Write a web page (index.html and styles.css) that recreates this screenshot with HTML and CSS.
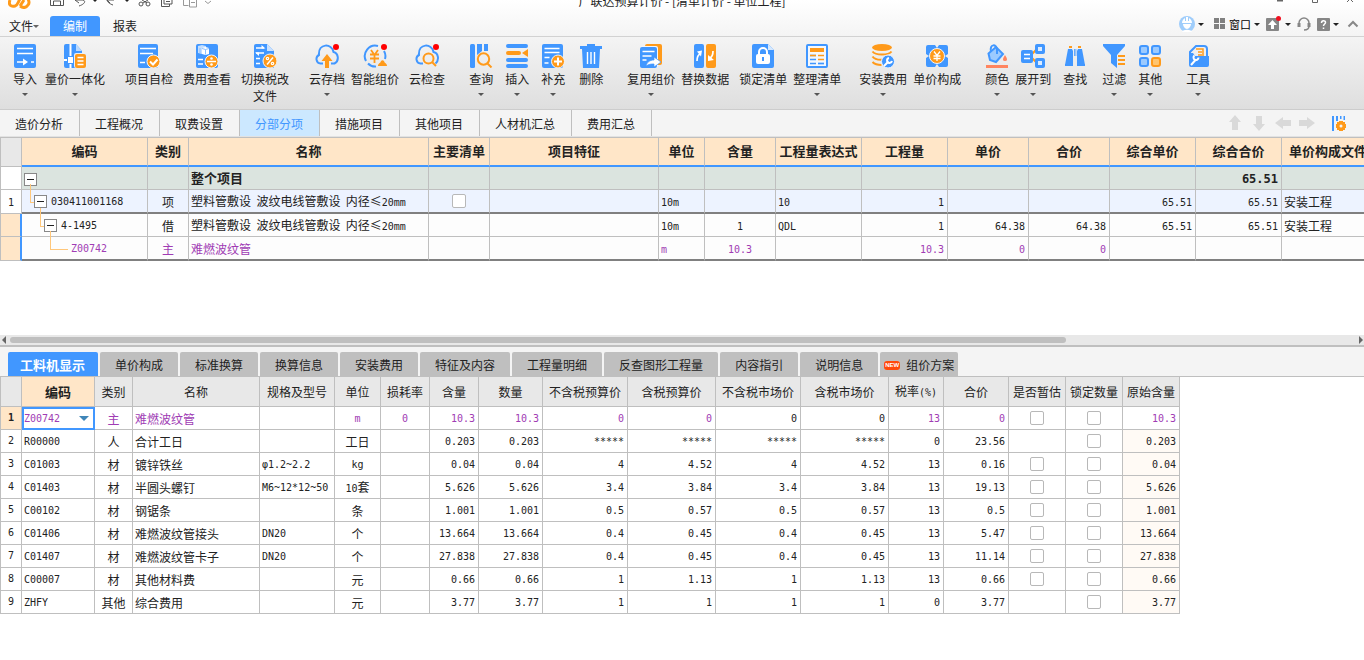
FILE: index.html
```html
<!DOCTYPE html>
<html lang="zh-CN">
<head>
<meta charset="utf-8">
<title>广联达预算计价</title>
<link rel="stylesheet" href="styles.css">
</head>
<body>
<header class="top">
  <div class="titlebar">
    <div class="quick">
      <svg class="logo" width="26" height="9" viewBox="0 0 26 9"><path d="M2 0c-2 5 1 7 5 6 3-1 3-4 5-7M12 6c3 2 6 2 8-1 2-2 1-4 0-6M12 6l4-6" fill="none" stroke="#ff9a1a" stroke-width="3"/></svg>
      <svg width="166" height="8" viewBox="0 0 166 8" fill="none" stroke="#555" stroke-width="1"><path d="M.5 0v5.500h13V0M3.500 5V1h7v4"/><path d="M25 0h8c3 1 2 4-4 6M28-2l-3 2 4 3" /><path d="M43 0h4l-2 2z" fill="#222" stroke="none"/><path d="M64 0h-7l3 3M57 0c0 2 3 4 6 5"/><path d="M75 0h4l-2 2z" fill="#222" stroke="none"/><path d="M92 0l5 3M98 0l-5 3"/><circle cx="91" cy="4" r="2"/><circle cx="98" cy="4" r="2"/><path d="M111.500 0v6.500h8V4M114 0v4h8V0M116 1.500h4"/><g stroke="#999"><path d="M133.500 0v5.500h5M139.500 0v7h7V0M141 2.500h4M155 1l3 2.500L161 1"/></g></svg>
    </div>
    <div class="apptitle">广联达预算计价 - [清单计价 - 单位工程]</div>
    <div class="winbtns">
      <svg width="80" height="6" viewBox="0 0 80 6" stroke="#666" fill="none"><path d="M0 .5h6" stroke-width="2"/><path d="M35.500 0v2.500h5V0M70 2l3-3 3 3"/></svg>
    </div>
  </div>
  <div class="menubar">
    <nav class="menus">
      <button class="menu file">文件<i class="caret sm"></i></button>
      <button class="menu on">编制</button>
      <button class="menu">报表</button>
    </nav>
    <div class="tools">
      <button class="user" aria-label="用户"><svg width="16" height="16" viewBox="0 0 16 16"><circle cx="8" cy="8" r="8" fill="#9fcdfb"/><path d="M3 7h10c0-2-1-4-3-5v3H9V1H7v4H6V2C4 3 3 5 3 7zM4 8h8c0 2-2 5-4 5s-4-3-4-5zM3 16c1-3 9-3 10 0z" fill="#fff"/></svg><i class="caret"></i></button>
      <button class="win"><svg width="12" height="12" viewBox="0 0 12 12" fill="#808080"><path d="M0 0h5v5H0zM6 0h5v5H6zM0 6h5v5H0zM6 6h5v5H6z"/></svg><span>窗口</span><i class="caret"></i></button>
      <button aria-label="上传"><svg width="16" height="16" viewBox="0 0 16 16"><rect y="2" width="13" height="13" rx="1" fill="#868686"/><path d="M6.500 4L11 9H8v4H5V9H2z" fill="#fff"/><circle cx="12.500" cy="2.500" r="2.500" fill="#f01020"/></svg><i class="caret"></i></button>
      <button aria-label="客服"><svg width="14" height="14" viewBox="0 0 14 14" fill="none" stroke="#868686" stroke-width="1.500"><path d="M2 9V6a5 5 0 0 1 10 0v3c0 3-2 4-5 4"/><path d="M2 6v4M12 6v4" stroke-width="3"/></svg></button>
      <button aria-label="帮助"><svg width="13" height="13" viewBox="0 0 13 13"><rect width="13" height="13" rx="1" fill="#868686"/><path d="M4.500 5c0-3 4-3 4-.5 0 1.500-2 1.500-2 3.500M6.500 9.500v1.500" fill="none" stroke="#fff" stroke-width="1.500"/></svg><i class="caret"></i></button>
      <button class="fold" aria-label="收起"><svg width="12" height="8" viewBox="0 0 12 8"><path d="M1.500 6.500L6 2l4.500 4.500" fill="none" stroke="#888" stroke-width="2"/></svg></button>
    </div>
  </div>
</header>

<div class="ribbon">
  <button class="rb"><svg viewBox="0 0 24 24"><rect class="b" x="1" width="22" height="24" rx="2"/><path class="ws" d="M4 4.500h16M4 9.500h16M4 18h8M18 18h3" stroke-width="1.700"/><path class="w" d="M10 14.500l5 3.500-5 3.500z"/></svg>导入<i class="caret"></i></button>
  <button class="rb g8"><svg viewBox="0 0 24 24"><path class="b" d="M3 0h10l6 7v14a2 2 0 0 1-2 3H3a2 2 0 0 1-2-2V2a2 2 0 0 1 2-2z"/><path d="M13 0l6 7h-6z" fill="#b9d9ff"/><path class="ws" d="M7.500 0v24M1 16h11"/><path class="b" d="M4 12h7v8H4z"/><path class="w" d="M5 13h5v6H5z"/><rect x="11" y="9" width="13" height="15" rx="2" fill="#e8eff8"/><rect class="o" x="12" y="10" width="11" height="14" rx="2"/><path class="ws" d="M14.500 13.500h6M14.500 17h6M14.500 20.500h6" stroke-width="1.500"/></svg>量价一体化<i class="caret"></i></button>
  <button class="rb g20"><svg viewBox="0 0 24 24"><rect class="b" x="1" width="20" height="24" rx="2"/><path class="ws" d="M3 4.500h16M3 9.500h13M3 18.500h5" stroke-width="1.700"/><circle class="oc" cx="16.500" cy="17.500" r="6.500"/><path class="ws" d="M13 17.500l3 3 4.500-5"/></svg>项目自检</button>
  <button class="rb g10"><svg viewBox="0 0 24 24"><rect class="b" x="1" width="22" height="24" rx="2"/><path d="M3 2l4-1 4 1v7l-4 1-4-1z" fill="#c4dfff"/><path d="M7 4l3.500-1L14 4v6l-3.500 1L7 10z" class="w"/><path d="M5 4v5M10.500 5.500v5M7 4.500l3.500 1 3.500-1" stroke="#8bbfff" fill="none" stroke-width="1"/><path class="ws" d="M3 15.500h5M3 20h5" stroke-width="1.700"/><circle class="oc" cx="16.500" cy="17.500" r="6.500"/><path class="ws" d="M12 17.500h9" stroke-width="1.500"/><circle class="w" cx="16.500" cy="14.500" r="1.300"/><circle class="w" cx="16.500" cy="20.500" r="1.300"/></svg>费用查看</button>
  <button class="rb g10"><svg viewBox="0 0 24 24"><path class="b" d="M3 0h11l7 7v17H3a2 2 0 0 1-2-2V2a2 2 0 0 1 2-2z"/><path d="M14 0l7 7h-7z" fill="#c9e1ff"/><path class="ws" d="M3 4h8M3 9h8M3 14.500h4M3 19.500h4" stroke-width="1.500"/><path class="w" d="M8.500 1l4 3.500h-4zM6 12L2 8.500h4z"/><circle class="oc" cx="17" cy="17" r="7"/><path class="ws" d="M14 20.500l6-7" stroke-width="1.500"/><circle class="ws" cx="14.500" cy="14.500" r="1.200" stroke-width="1.200"/><circle class="ws" cx="19.500" cy="19.500" r="1.200" stroke-width="1.200"/></svg><span>切换税改<br>文件</span></button>
  <button class="rb g20"><svg viewBox="0 0 24 24"><path class="bs" d="M8 19.500H5.500A4.500 4.500 0 0 1 4 11C3-1 17-1 18.500 8c5 1 6 9 1 11.500H16"/><path class="o" d="M12 10l5.500 7H14v7h-4v-7H6.500z"/><circle class="red" cx="21" cy="3" r="3"/></svg>云存档<i class="caret"></i></button>
  <button class="rb g6"><svg viewBox="0 0 24 24"><path class="bs" d="M15 2A10.500 10.500 0 0 0 3 17M5 19.500a10 10 0 0 0 8 3M21 7a10 10 0 0 1 1 8"/><path class="os" d="M8 6l3.500 5L15 6M7 10.500h9M7 14.500h9M11.500 10v9" stroke-width="1.800"/><path class="o" d="M15 22c0-3 2-2 3-5 1-1 2-1 3 0 1 3 3 2 3 5z"/><circle class="red" cx="21" cy="3" r="3"/></svg>智能组价</button>
  <button class="rb g10"><svg viewBox="0 0 24 24"><path class="bs" d="M8 19.500H5.500A4.500 4.500 0 0 1 4 11C3-1 17-1 18.500 8c5 1 6 8 2 11.500"/><circle class="os" cx="13.500" cy="14.500" r="5"/><path class="os" d="M17 18l4 4"/><circle class="red" cx="21" cy="3" r="3"/></svg>云检查</button>
  <button class="rb g24"><svg viewBox="0 0 24 24"><rect class="b" x="1" width="5" height="24" rx="1.500"/><path class="b" d="M8 0h5v7l-5 4zM15 0h4v7h-4z"/><circle class="os" cx="14.500" cy="15" r="5.700"/><path class="os" d="M18.500 19.500l4 4"/></svg>查询<i class="caret"></i></button>
  <button class="rb g12"><svg viewBox="0 0 24 24"><path class="b" d="M3 0h18q2 0 2 2t-2 2H3Q1 4 1 2t2-2zM3 14h18q2 0 2 2t-2 2H3q-2 0-2-2t2-2zM3 20h18q2 0 2 2t-2 2H3q-2 0-2-2t2-2z"/><path class="o" d="M3 7h11q2 0 2 2t-2 2H3q-2 0-2-2t2-2zM23 5v8l-6-4z"/></svg>插入<i class="caret"></i></button>
  <button class="rb g12"><svg viewBox="0 0 24 24"><rect class="b" x="1" width="21" height="24" rx="2"/><path class="ws" d="M3.500 4.500h15M3.500 8.500h15M3.500 13.500h5M3.500 19h4" stroke-width="1.500"/><circle class="oc" cx="17" cy="17.500" r="6.500"/><path class="ws" d="M13 17.500h8M17 13.500v8"/></svg>补充<i class="caret"></i></button>
  <button class="rb g14"><svg viewBox="0 0 24 24"><path class="b" d="M8 0h8v2h7v3h-2l-1 19H4L3 5H1V2h7z"/><path class="ws" d="M8.500 8v12M12 8v12M15.500 8v12" stroke-width="1.400"/></svg>删除</button>
  <button class="rb g24"><svg viewBox="0 0 24 24"><rect class="o" x="6" width="17" height="21" rx="2"/><rect x="1" y="2" width="18" height="22" rx="2" fill="#f2f5fa"/><rect class="b" x="1" y="3" width="17" height="21" rx="2"/><path class="ws" d="M3.500 7.500h12M3.500 12h9M3.500 16h4" stroke-width="1.500"/><path d="M7 22c1-4 4-6 8-6v-3l7 5-7 5v-3c-3 0-5 0-8 2z" class="w" stroke="#4197ff" stroke-width=".7"/></svg>复用组价<i class="caret"></i></button>
  <button class="rb g6"><svg viewBox="0 0 24 24"><rect class="b" x="1" width="10" height="24" rx="2"/><rect class="o" x="13" width="10" height="24" rx="2"/><path class="ws" d="M4 17c0-4 1-6 3-7M20 7c0 4-1 6-3 7" stroke-width="1.700"/><path class="w" d="M4 7.500l5-1-1 6zM15 11v6l6-1z"/></svg>替换数据</button>
  <button class="rb g10"><svg viewBox="0 0 24 24"><path class="b" d="M3 0h14l6 6v16a2 2 0 0 1-2 2H3a2 2 0 0 1-2-2V2a2 2 0 0 1 2-2z"/><path d="M17 0l6 6h-6z" fill="#d4e8ff"/><path class="ws" d="M8 11V8a4 4 0 0 1 8 0v3"/><rect class="w" x="5" y="10" width="14" height="10" rx="2"/><path class="bs" d="M12 13v4"/></svg>锁定清单</button>
  <button class="rb g6"><svg viewBox="0 0 24 24"><rect x="2" y="1" width="20" height="22" rx="1" fill="#f4f8fd" stroke="#4197ff"/><rect class="o" x="5" y="4" width="14" height="4"/><path class="bs" d="M5 11.500h6M5 15.500h6M5 19.500h6" stroke-width="1.700"/><path class="os" d="M13 15.500h6M5 11.500h6M13 11.500h6" stroke-width="1.700"/><path class="bs" d="M13 19.500h6" stroke-width="1.700"/></svg>整理清单<i class="caret"></i></button>
  <button class="rb g18"><svg viewBox="0 0 24 24"><ellipse class="o" cx="11" cy="3.500" rx="10" ry="3.500"/><path class="os" d="M1.500 7.500c3 4 16 4 19 0M1.500 12.500c2 3 8 3.500 12 3M1.500 18c2 2 5 3 9 3"/><circle cx="17" cy="17.500" r="6.500" fill="#4197ff" stroke="#eef4fb" stroke-width="1"/><path class="ws" d="M13 22l4.500-4.500"/><path class="ws" d="M18 14a2.500 2.500 0 1 0 3 3"/></svg>安装费用<i class="caret"></i></button>
  <button class="rb g6"><svg viewBox="0 0 24 24"><path class="b" d="M3 1h7l2 3 2-3h7q2 0 2 2v7l-3 2 3 2v7q0 2-2 2h-7l-2-3-2 3H3q-2 0-2-2v-7l3-2-3-2V3q0-2 2-2z"/><circle class="oc" cx="12" cy="12" r="7.500"/><path class="ws" d="M9 7.500l3 4 3-4M8.500 12h7M8.500 14.500h7M12 11v6" stroke-width="1.300"/></svg>单价构成</button>
  <button class="rb g24"><svg viewBox="0 0 24 24"><path d="M3.500 9.500L11 3l7 7-7 8-6-2z" fill="#9bcaff" stroke="#4197ff"/><path class="bs" d="M6 8c-2-9 6-8 6-2v4"/><path d="M20 11q4 6 0 6t0-6zM1 21h22v3H1z" fill="#ff8560"/></svg>颜色<i class="caret"></i></button>
  <button class="rb g6"><svg viewBox="0 0 24 24"><path class="os" d="M11 10l5-5M11 14l5 5"/><rect class="b" y="6" width="12" height="13" rx="2"/><path class="ws" d="M3 10.500h6M3 14.500h6" stroke-width="1.500"/><rect class="b" x="14" width="10" height="10" rx="2"/><rect class="b" x="14" y="14" width="10" height="10" rx="2"/><path d="M17 3h4v4h-4zM17 17h4v4h-4z" fill="#dcecff"/></svg>展开到<i class="caret"></i></button>
  <button class="rb g12"><svg viewBox="0 0 24 24"><path class="b" d="M5 5h4l1 2v14H2zM15 5h4l3 16h-8V7zM11 5h.8v7H11zM12.500 5h.8v7h-.8z"/><path class="b" d="M2 20h8v2H2zM14 20h8v2h-8z"/><path class="o" d="M6 2h3v2H6zM15 2h3v2h-3z"/></svg>查找</button>
  <button class="rb g15"><svg viewBox="0 0 24 24"><path class="b" d="M1 0h22v2l-8 9v13l-6-5v-8L1 2z"/><path class="os" d="M16 12h7M16 16h7M16 20h7"/></svg>过滤<i class="caret"></i></button>
  <button class="rb g12"><svg viewBox="0 0 24 24" fill="#9bcaff" stroke="#4197ff"><rect x="2" y="2" width="8" height="8" rx="2"/><rect x="14" y="2" width="8" height="8" rx="2"/><rect x="2" y="14" width="8" height="8" rx="2"/><rect x="14" y="14" width="8" height="8" rx="2" fill="#ffc56f" stroke="#ff9a1a"/></svg>其他<i class="caret"></i></button>
  <button class="rb g24"><svg viewBox="0 0 24 24"><path class="bs" d="M4 12V8l6-6h8q3 0 3 3v7"/><path class="os" d="M10 5h7v7M12 8h4M12 11h4" stroke-width="1.500"/><path class="b" d="M3 9h4l2 3h14v9q0 2-2 2H5q-2 0-2-2z"/><path class="ws" d="M5 21l4.500-5"/><path class="ws" d="M8.500 11.500a2.500 2.500 0 1 0 4 2"/></svg>工具<i class="caret"></i></button>
</div>

<div class="pagebar">
  <nav class="pages">
    <button>造价分析</button><button>工程概况</button><button>取费设置</button><button class="on">分部分项</button><button>措施项目</button><button>其他项目</button><button>人材机汇总</button><button>费用汇总</button>
  </nav>
  <div class="moves">
    <button aria-label="上移"><svg viewBox="0 0 16 16"><path d="M8 0l6 7h-3v8H5V7H2z"/></svg></button>
    <button aria-label="下移"><svg viewBox="0 0 16 16"><path d="M8 16l6-7h-3V1H5v8H2z"/></svg></button>
    <button aria-label="左移"><svg viewBox="0 0 16 16"><path d="M0 8l8-6v3h8v6H8v3z"/></svg></button>
    <button aria-label="右移"><svg viewBox="0 0 16 16"><path d="M16 8L8 2v3H0v6h8v3z"/></svg></button>
    <button class="cols" aria-label="列设置"><svg viewBox="0 0 16 16"><path class="b" d="M1 1h2v15H1zM5 1h2v5H5zM9 1h1.500v3H9zM12.500 1H14v4h-1.500z"/><path class="o" d="M8 6h4v1h2v2h1v4h-1v2h-2v1H8v-1H6v-2H5V9h1V7h2z"/><circle cx="10" cy="11" r="1.500" fill="#f4f4f4"/></svg></button>
  </div>
</div>

<main class="upper">
<table class="grid bill">
<colgroup><col class="w22"><col class="w126"><col class="w41"><col class="w240"><col class="w61"><col class="w169"><col class="w46"><col class="w71"><col class="w86"><col class="w86"><col class="w81"><col class="w81"><col class="w86"><col class="w86"><col class="w93"></colgroup>
<thead><tr><th class="no"></th><th>编码</th><th>类别</th><th>名称</th><th>主要清单</th><th>项目特征</th><th>单位</th><th>含量</th><th>工程量表达式</th><th>工程量</th><th>单价</th><th>合价</th><th>综合单价</th><th>综合合价</th><th>单价构成文件</th></tr></thead>
<tbody>
<tr class="total"><td class="no"></td><td class="tree"><button class="tg" aria-label="折叠"></button></td><td></td><td>整个项目</td><td></td><td></td><td></td><td></td><td></td><td></td><td></td><td></td><td></td><td class="r"><span class="m big">65.51</span></td><td></td></tr>
<tr class="item"><td class="no"><span class="m">1</span></td><td class="tree l1"><button class="tg" aria-label="折叠"></button><span class="m">030411001168</span></td><td class="c">项</td><td>塑料管敷设&nbsp; 波纹电线管敷设&nbsp; 内径≤<span class="m">20mm</span></td><td class="c"><input type="checkbox" aria-label="主要清单"></td><td></td><td><span class="m">10m</span></td><td></td><td><span class="m">10</span></td><td class="r"><span class="m">1</span></td><td></td><td></td><td class="r"><span class="m">65.51</span></td><td class="r"><span class="m">65.51</span></td><td>安装工程</td></tr>
<tr class="sub"><td class="no cur"></td><td class="tree l2"><button class="tg" aria-label="折叠"></button><span class="m">4-1495</span></td><td class="c">借</td><td>塑料管敷设&nbsp; 波纹电线管敷设&nbsp; 内径≤<span class="m">20mm</span></td><td></td><td></td><td><span class="m">10m</span></td><td class="c"><span class="m">1</span></td><td><span class="m">QDL</span></td><td class="r"><span class="m">1</span></td><td class="r"><span class="m">64.38</span></td><td class="r"><span class="m">64.38</span></td><td class="r"><span class="m">65.51</span></td><td class="r"><span class="m">65.51</span></td><td>安装工程</td></tr>
<tr class="sub last pur"><td class="no cur"></td><td class="tree l3"><span class="m">Z00742</span></td><td class="c">主</td><td>难燃波纹管</td><td></td><td></td><td><span class="m">m</span></td><td class="c"><span class="m">10.3</span></td><td></td><td class="r"><span class="m">10.3</span></td><td class="r"><span class="m">0</span></td><td class="r"><span class="m">0</span></td><td></td><td></td><td></td></tr>
</tbody></table>
</main>

<div class="scroll"><i class="al"></i><div class="track"><div class="thumb"></div></div><i class="ar"></i></div>

<nav class="subtabs">
  <button class="on">工料机显示</button><button>单价构成</button><button>标准换算</button><button>换算信息</button><button>安装费用</button><button>特征及内容</button><button>工程量明细</button><button>反查图形工程量</button><button>内容指引</button><button>说明信息</button><button class="new"><b>NEW</b>组价方案</button>
</nav>

<section class="lower">
<table class="grid mat">
<colgroup><col class="w22"><col class="w73"><col class="w38"><col class="w127"><col class="w75"><col class="w46"><col class="w49"><col class="w49"><col class="w64"><col class="w85"><col class="w88"><col class="w85"><col class="w88"><col class="w55"><col class="w65"><col class="w57"><col class="w57"><col class="w57"></colgroup>
<thead><tr><th class="no"></th><th class="sel">编码</th><th>类别</th><th>名称</th><th>规格及型号</th><th>单位</th><th>损耗率</th><th>含量</th><th>数量</th><th>不含税预算价</th><th>含税预算价</th><th>不含税市场价</th><th>含税市场价</th><th>税率<span class="m">(%)</span></th><th>合价</th><th>是否暂估</th><th>锁定数量</th><th>原始含量</th></tr></thead>
<tbody>
<tr class="pur"><td class="no cur">1</td><td class="pick"><select aria-label="编码"><option>Z00742</option></select></td><td>主</td><td>难燃波纹管</td><td></td><td class="m">m</td><td class="m">0</td><td>10.3</td><td>10.3</td><td>0</td><td>0</td><td class="blk">0</td><td class="blk">0</td><td>13</td><td>0</td><td><input type="checkbox" aria-label="是否暂估"></td><td><input type="checkbox" aria-label="锁定数量"></td><td>10.3</td></tr>
<tr><td class="no">2</td><td>R00000</td><td>人</td><td>合计工日</td><td></td><td>工日</td><td></td><td>0.203</td><td>0.203</td><td>*****</td><td>*****</td><td>*****</td><td>*****</td><td>0</td><td>23.56</td><td></td><td><input type="checkbox" aria-label="锁定数量"></td><td>0.203</td></tr>
<tr><td class="no">3</td><td>C01003</td><td>材</td><td>镀锌铁丝</td><td>φ1.2~2.2</td><td class="m">kg</td><td></td><td>0.04</td><td>0.04</td><td>4</td><td>4.52</td><td>4</td><td>4.52</td><td>13</td><td>0.16</td><td><input type="checkbox" aria-label="是否暂估"></td><td><input type="checkbox" aria-label="锁定数量"></td><td>0.04</td></tr>
<tr><td class="no">4</td><td>C01403</td><td>材</td><td>半圆头螺钉</td><td>M6~12*12~50</td><td><span class="m">10</span>套</td><td></td><td>5.626</td><td>5.626</td><td>3.4</td><td>3.84</td><td>3.4</td><td>3.84</td><td>13</td><td>19.13</td><td><input type="checkbox" aria-label="是否暂估"></td><td><input type="checkbox" aria-label="锁定数量"></td><td>5.626</td></tr>
<tr><td class="no">5</td><td>C00102</td><td>材</td><td>钢锯条</td><td></td><td>条</td><td></td><td>1.001</td><td>1.001</td><td>0.5</td><td>0.57</td><td>0.5</td><td>0.57</td><td>13</td><td>0.5</td><td><input type="checkbox" aria-label="是否暂估"></td><td><input type="checkbox" aria-label="锁定数量"></td><td>1.001</td></tr>
<tr><td class="no">6</td><td>C01406</td><td>材</td><td>难燃波纹管接头</td><td>DN20</td><td>个</td><td></td><td>13.664</td><td>13.664</td><td>0.4</td><td>0.45</td><td>0.4</td><td>0.45</td><td>13</td><td>5.47</td><td><input type="checkbox" aria-label="是否暂估"></td><td><input type="checkbox" aria-label="锁定数量"></td><td>13.664</td></tr>
<tr><td class="no">7</td><td>C01407</td><td>材</td><td>难燃波纹管卡子</td><td>DN20</td><td>个</td><td></td><td>27.838</td><td>27.838</td><td>0.4</td><td>0.45</td><td>0.4</td><td>0.45</td><td>13</td><td>11.14</td><td><input type="checkbox" aria-label="是否暂估"></td><td><input type="checkbox" aria-label="锁定数量"></td><td>27.838</td></tr>
<tr><td class="no">8</td><td>C00007</td><td>材</td><td>其他材料费</td><td></td><td>元</td><td></td><td>0.66</td><td>0.66</td><td>1</td><td>1.13</td><td>1</td><td>1.13</td><td>13</td><td>0.66</td><td><input type="checkbox" aria-label="是否暂估"></td><td><input type="checkbox" aria-label="锁定数量"></td><td>0.66</td></tr>
<tr><td class="no">9</td><td>ZHFY</td><td>其他</td><td>综合费用</td><td></td><td>元</td><td></td><td>3.77</td><td>3.77</td><td>1</td><td>1</td><td>1</td><td>1</td><td>0</td><td>3.77</td><td></td><td><input type="checkbox" aria-label="锁定数量"></td><td>3.77</td></tr>
</tbody></table>
</section>
</body>
</html>
```
FILE: styles.css
```css
* { box-sizing: border-box; }
body {
  margin: 0;
  min-height: 100vh;
  display: flex;
  flex-direction: column;
  overflow-x: hidden;
  background: #fff;
  color: #222;
  font: 12px/18px "Noto Sans CJK SC", sans-serif;
}
button {
  margin: 0;
  padding: 0;
  border: 0;
  background: none;
  color: inherit;
  font: inherit;
  white-space: nowrap;
}
svg { display: block; overflow: hidden; }
.b { fill: #4197ff; }
.o { fill: #ff9a1a; }
.w { fill: #fff; }
.red { fill: #f00; }
.bs, .os, .ws { fill: none; }
.bs { stroke: #4197ff; }
.os { stroke: #ff9a1a; }
.ws { stroke: #fff; }
.oc { fill: #ff9a1a; stroke: #f2f5fa; stroke-width: 1; }
.caret {
  display: block;
  border: 3px solid transparent;
  border-top-color: #222;
  border-bottom: 0;
}

/* title and menus */
.top { background: linear-gradient(#fff, #f4f4f4); border-bottom: 1px solid #d2d2d2; }
.titlebar {
  display: grid;
  grid-template-columns: 1fr auto 1fr;
  height: 9px;
  overflow: hidden;
}
.quick { display: flex; gap: 16px; padding-left: 8px; }
.apptitle { display: flex; align-items: flex-end; height: 9px; line-height: 16px; }
.winbtns { display: flex; justify-content: flex-end; padding-right: 7px; }
.menubar { display: flex; justify-content: space-between; align-items: flex-end; height: 27px; }
.menus { display: flex; }
.menu { width: 50px; height: 20px; border-radius: 3px 3px 0 0; }
.menu.on { background: #4197ff; color: #fff; }
.file { display: flex; align-items: center; padding-left: 9px; }
.caret.sm { border-top-color: #666; }
.tools { display: flex; align-items: center; gap: 6px; height: 24px; padding-right: 5px; }
.tools button { display: flex; align-items: center; gap: 3px; }
.tools .user { margin-right: 4px; }
.tools .fold { margin-left: 2px; }
.win { font-size: 11px; color: #000; }

/* ribbon */
.ribbon {
  display: flex;
  height: 73px;
  padding: 7px 0 0 13px;
  background: linear-gradient(#f4f4f4, #dedede);
  border-bottom: 1px solid #ccc;
}
.rb { display: flex; flex: none; flex-direction: column; align-items: center; line-height: 17px; gap: 2px; }
.rb svg { width: 24px; height: 24px; stroke-width: 2px; }
.rb .caret { margin-top: 4px; border-top-color: #555; }
.g6 { margin-left: 6px; }
.g8 { margin-left: 8px; }
.g10 { margin-left: 10px; }
.g12 { margin-left: 12px; }
.g14 { margin-left: 14px; }
.g15 { margin-left: 15px; }
.g18 { margin-left: 18px; }
.g20 { margin-left: 20px; }
.g24 { margin-left: 24px; }

/* page tabs */
.pagebar {
  display: flex;
  justify-content: space-between;
  height: 27px;
  background: #f4f4f4;
  border-bottom: 1px solid #e2e2e2;
}
.pages { display: flex; }
.pages button { padding: 2px 16px 0 15px; border-right: 1px solid #bfbfbf; }
.pages .on { background: #cce8ff; color: #4197ff; }
.moves { display: flex; align-items: center; gap: 8px; padding-right: 17px; }
.moves svg { width: 16px; height: 16px; fill: #d9d9d9; }
.moves .cols { margin-left: 8px; }

/* grids */
.grid { table-layout: fixed; border-collapse: separate; border-spacing: 0; }
.grid th, .grid td {
  height: 23px;
  padding: 2px 2px 0;
  overflow: hidden;
  white-space: nowrap;
  text-align: left;
  border: 0 solid #bfbfbf;
  border-width: 0 1px 1px 0;
}
.grid th { text-align: center; padding: 0; }
.grid .no { text-align: center; padding: 0; border-left-width: 1px; }
.grid .r { text-align: right; padding-right: 3px; }
.grid .c { text-align: center; }
.m { font-family: "DejaVu Sans Mono", monospace; font-size: 10px; }
.grid .cur { background: #ffe6c8; }
.grid .pur td { color: #a03cb4; }
.grid .pur .blk { color: #222; }
.grid td:has(input) { padding-top: 0; }
.grid input {
  appearance: none;
  display: block;
  width: 14px;
  height: 14px;
  margin: 0 auto;
  background: #fff;
  border: 1px solid #b8b8b8;
  border-radius: 2px;
}
.w22 { width: 22px; } .w38 { width: 38px; } .w41 { width: 41px; } .w46 { width: 46px; }
.w49 { width: 49px; } .w55 { width: 55px; } .w57 { width: 57px; } .w61 { width: 61px; }
.w64 { width: 64px; } .w65 { width: 65px; } .w71 { width: 71px; } .w73 { width: 73px; }
.w75 { width: 75px; } .w81 { width: 81px; } .w85 { width: 85px; } .w86 { width: 86px; }
.w88 { width: 88px; } .w93 { width: 93px; } .w126 { width: 126px; } .w127 { width: 127px; }
.w169 { width: 169px; } .w240 { width: 240px; }

.upper { min-height: 198px; overflow: hidden; }
.bill { width: 1375px; }
.bill th {
  height: 30px;
  padding-bottom: 2px;
  font-size: 13px;
  background: #ffe6c8;
  border-width: 1px 1px 2px 0;
  border-bottom-color: #4197ff;
}
.bill th.no { background: #e8e8e8; border-bottom: 1px solid #bfbfbf; }
.bill .total td { padding-top: 0; background: #dbe4df; font-weight: bold; font-size: 13px; }
.bill .total .no { background: #fff; }
.bill .total .m { font-size: 12px; }
.bill .item td { height: 24px; background: #edf3ff; border-bottom: 2px solid #808080; }
.bill .item .no { background: #fff; border-bottom: 1px solid #bfbfbf; }
.bill .sub td { height: 22px; background: #fdfdfd; }
.bill .last td { height: 23px; border-bottom: 2px solid #808080; }
.bill .sub .cur { background: #ffe6c8; border-right: 2px solid #4197ff; border-bottom: 1px solid #bfbfbf; }
.bill .tree { position: relative; overflow: visible; padding-top: 0; }
.tg {
  display: inline-block;
  position: relative;
  width: 13px;
  height: 13px;
  margin-right: 4px;
  vertical-align: middle;
  background: #fff;
  border: 1px solid #888;
}
.tg::after { content: ""; position: absolute; left: 2px; right: 2px; top: 5px; height: 1px; background: #222; }
.bill .l1 { padding-left: 12px; }
.bill .l2 { padding-left: 22px; }
.bill .l3 { padding-left: 49px; }
.l1::before, .l2::before, .l3::before {
  content: "";
  position: absolute;
  top: -6px;
  left: 8px;
  width: 4px;
  height: 18px;
  border: solid #ffc77a;
  border-width: 0 0 1px 1px;
}
.l2::before { left: 18px; }
.l3::before { left: 28px; width: 17px; }

/* scrollbar between panes */
.scroll {
  display: flex;
  align-items: center;
  height: 12px;
  padding: 0 1px 0 2px;
  background: #e8e8e8;
  border-bottom: 2px solid #bfbfbf;
}
.track { flex: 1; padding: 0 4px; }
.thumb { width: 78.5%; height: 6px; border-radius: 3px; background: #bfbfbf; }
.al, .ar { border: 4px solid transparent; }
.al { border-right-color: #666; border-left: 0; }
.ar { border-left-color: #666; border-right: 0; }

/* lower tabs */
.subtabs {
  display: flex;
  gap: 2px;
  height: 30px;
  padding: 5px 8px 0;
  background: #f4f4f4;
  border-bottom: 1px solid #bfbfbf;
}
.subtabs button { padding: 2px 15px 0; background: #bfbfbf; border-radius: 2px 2px 0 0; }
.subtabs .on { padding: 2px 13px 0 12px; background: #4197ff; color: #fff; font-size: 13px; font-weight: bold; }
.subtabs .new { display: flex; align-items: center; gap: 6px; padding: 2px 4px 0; }
.new b {
  width: 16px;
  height: 9px;
  border-radius: 3px;
  background: #ff4a0a;
  color: #fff;
  text-align: center;
  font: bold 6px/9px "Liberation Sans", sans-serif;
}

.mat { width: 1180px; }
.mat th { height: 30px; font-weight: normal; background: #e8e8e8; }
.mat th.sel { background: #ffe6c8; font-size: 13px; font-weight: bold; }
.mat td { text-align: right; padding-right: 3px; font-family: "DejaVu Sans Mono", monospace; font-size: 10px; }
.mat td:nth-child(2), .mat td:nth-child(4), .mat td:nth-child(5) { text-align: left; }
.mat td:nth-child(3), .mat td:nth-child(6), .mat td:nth-child(7) { text-align: center; padding: 2px 0 0; }
.mat td:nth-child(3), .mat td:nth-child(4), .mat td:nth-child(6) { font: 12px/18px "Noto Sans CJK SC", sans-serif; }
.mat td.m:nth-child(6) { font: 10px/18px "DejaVu Sans Mono", monospace; }
.mat td:last-child { background: #fffaf5; }
.mat .pur td:last-child { background: #fff; }
.mat .cur { font-weight: bold; }
.grid .pur .cur { color: #222; }
.mat td.pick { position: relative; padding: 0; border: 2px solid #4197ff; }
.pick select {
  display: block;
  appearance: none;
  width: 100%;
  margin: 0;
  padding: 0;
  border: 0;
  background: none;
  color: inherit;
  font: inherit;
}
.pick::after {
  content: "";
  position: absolute;
  right: 4px;
  top: 7px;
  border: 5px solid transparent;
  border-top-color: #3f86b8;
  border-bottom: 0;
}
```
